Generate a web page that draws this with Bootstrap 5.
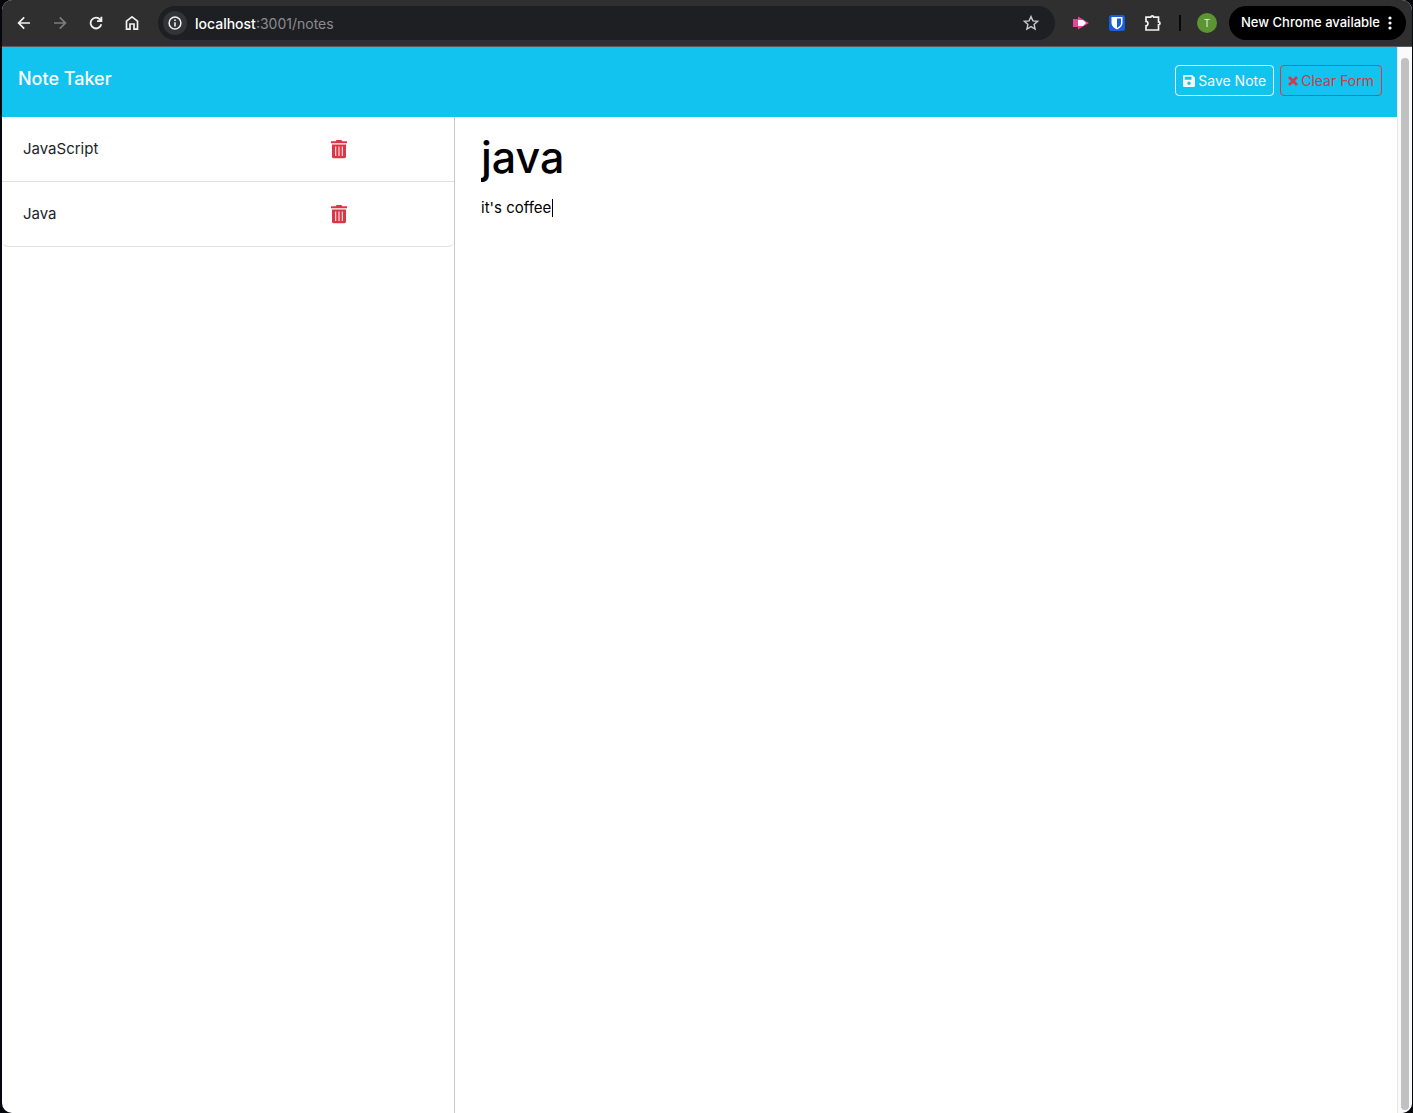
<!DOCTYPE html>
<html lang="en">
<head>
<meta charset="utf-8">
<meta name="viewport" content="width=device-width, initial-scale=1">
<title>Note Taker</title>
<link href="https://cdn.jsdelivr.net/npm/bootstrap@5.3.0/dist/css/bootstrap.min.css" rel="stylesheet">
<style>
  body { font-family: Inter, "Liberation Sans", sans-serif; background: #05070d; padding: 0 1px 0 2px; }
  svg { display: block; flex: none; }
  .browser { border-radius: 10px; background: #fff; }
  .toolbar { height: 47px; background: #2f2f2f; border-bottom: 1px solid #5a5a5a; padding: 0 6px 0 12px; }
  .tool-btn { width: 20px; height: 20px; margin-right: 16px; padding: 0; border: 0; background: none; color: #f1f1f1; display: flex; align-items: center; justify-content: center; }
  .tool-btn.off { color: #7d7d7d; }
  .omnibox { height: 34px; background: #1e1f23; color: #8b8c8f; font-size: 14px; padding: 0 14px 0 5px; margin-right: 16px; }
  .omnibox b { color: #fff; font-weight: 500; }
  .site-info { width: 24px; height: 24px; background: #333437; margin-right: 8px; color: #f1f1f1; }
  .avatar { width: 20px; height: 20px; background: #5b9632; color: #e4efdc; font-size: 10px; }
  .bar-line { width: 2px; height: 16px; background: #080808; margin-right: 16px; }
  .update { height: 34px; background: #000; color: #fff; border: 0; font-size: 13px; font-weight: 500; padding: 0 14px 0 12px; gap: 8px; margin-left: 12px; }
  .page-head { height: 70px; background: #12c3f0; padding: 0 15px 0 16px; }
  .brand { color: #fff; font-size: 18px; font-weight: 500; line-height: 30px; margin-top: 17px; }
  .head-actions { gap: 6px; padding-bottom: 3px; }
  .head-btn { height: 31px; font-size: 14px; line-height: 20px; padding: 0 7px; gap: 3px; border-radius: 4px; }
  .notes-wrap { padding-right: 12px; }
  .notes-pane { border-right: 1px solid #c9c9c9; }
  .note-row { height: 65px; padding: 1px 21px 0; font-size: 15px; --bs-list-group-border-color: #dfdfdf; --bs-list-group-color: #212529; }
  .note-row:first-child { border-top: 0; border-radius: 0; }
  .note-row + .note-row { border-radius: 0 0 6px 6px; }
  .editor { padding: 0 12px; }
  .field { display: block; width: 100%; border: 0; outline: 0; padding: 0 2px; color: #000; resize: none; background: none; }
  .title-field { font-size: 43px; font-weight: 500; line-height: 56px; height: 56px; margin: 12px 0 8px; }
  .text-field { font-size: 15px; line-height: 30px; }
  .caret { position: absolute; left: 73px; top: 6px; width: 1px; height: 18px; background: #000; }
  .scroll-track { width: 15px; background: #fafafa; border-left: 1px solid #e8e8e8; padding: 11px 3px 3px; border-radius: 0 0 10px 0; }
  .scroll-thumb { width: 8px; border-radius: 4px; background: #c1c1c1; }
</style>
<script src="https://cdn.jsdelivr.net/npm/bootstrap@5.3.0/dist/js/bootstrap.bundle.min.js"></script>
</head>
<body>
<div class="browser d-flex flex-column vh-100 overflow-hidden">
  <div class="toolbar d-flex align-items-center flex-shrink-0">
    <button class="tool-btn" aria-label="Back"><svg width="14" height="14" viewBox="0 0 14 14" fill="none" stroke="currentColor" stroke-width="1.7"><path d="M13 7H2M7.2 1.3 1.6 7l5.6 5.7"/></svg></button>
    <button class="tool-btn off" aria-label="Forward"><svg width="14" height="14" viewBox="0 0 14 14" fill="none" stroke="currentColor" stroke-width="1.7"><path d="M1 7h11M6.8 1.3 12.4 7l-5.6 5.7"/></svg></button>
    <button class="tool-btn" aria-label="Reload"><svg width="14" height="14" viewBox="0 0 14 14" fill="none" stroke="currentColor" stroke-width="1.8"><path d="M12.3 8.3A5.4 5.4 0 1 1 11.2 3.6l1 1.2M12.4.8v4.3H8"/></svg></button>
    <button class="tool-btn" aria-label="Home"><svg width="14" height="14" viewBox="0 0 14 14" fill="none" stroke="currentColor" stroke-width="1.7"><path d="M1.5 13.2V5.2L7 .9l5.5 4.3v8H9V8H5v5.2z"/></svg></button>
    <div class="omnibox d-flex align-items-center flex-grow-1 rounded-pill">
      <span class="site-info rounded-circle d-flex align-items-center justify-content-center"><svg width="14" height="14" viewBox="0 0 14 14"><circle cx="7" cy="7" r="5.9" fill="none" stroke="currentColor" stroke-width="1.5"/><path d="M6.2 6.2h1.6v4.2H6.2zM6.2 3.5h1.6v1.6H6.2z" fill="currentColor"/></svg></span>
      <span class="flex-grow-1"><b>localhost</b>:3001/notes</span>
      <svg width="20" height="20" viewBox="0 0 20 20" fill="none" stroke="#c9c9c9" stroke-width="1.4"><path d="m10 3.6 1.900 4.300 4.700.4-3.500 3.100 1 4.600-4.100-2.400L5.900 16l1-4.600-3.500-3.100 4.700-.4z"/></svg>
    </div>
    <button class="tool-btn" aria-label="Recorder"><svg width="18" height="16" viewBox="0 0 18 16"><path d="M1 4h5V1.500L17 8 6 14.500V12H1z" fill="#e9429f"/><path d="M6 5h5l3 3-3 3H6z" fill="#fff"/></svg></button>
    <button class="tool-btn" aria-label="Password manager"><svg width="16" height="16" viewBox="0 0 16 16"><rect width="16" height="16" rx="2.500" fill="#175ddc"/><path d="M2.500 2h11v6c0 3-2.300 5-5.500 6.500C4.800 13 2.500 11 2.500 8z" fill="#fff"/><path d="M8 3.600h4V8c0 2-1.500 3.500-4 4.900z" fill="#175ddc"/></svg></button>
    <button class="tool-btn" aria-label="Extensions"><svg width="18" height="18" viewBox="0 0 18 18" fill="none" stroke="currentColor" stroke-width="1.700"><path d="M2 3.200h4.700a1.500 1.300 0 0 1 3 0h4.800v4.600a1.500 1.500 0 0 1 0 3v5.200H2v-4.200c2.600 0 2.600-4.400 0-4.400z"/></svg></button>
    <span class="bar-line"></span>
    <span class="avatar rounded-circle d-flex align-items-center justify-content-center">T</span>
    <button class="update rounded-pill d-flex align-items-center">New Chrome available <svg width="4" height="16" viewBox="0 0 4 16" fill="#fff"><circle cx="2" cy="3" r="1.600"/><circle cx="2" cy="8" r="1.600"/><circle cx="2" cy="13" r="1.600"/></svg></button>
  </div>
  <div class="d-flex flex-grow-1">
    <div class="flex-grow-1 d-flex flex-column">
      <nav class="page-head d-flex justify-content-between">
        <a class="brand text-decoration-none" href="#">Note Taker</a>
        <div class="head-actions d-flex align-items-center">
          <button class="btn btn-outline-light head-btn d-flex align-items-center"><svg width="12" height="12" viewBox="0 0 12 12"><path fill="currentColor" fill-rule="evenodd" d="M1.300 0h7.900L12 2.800v7.900c0 .7-.6 1.300-1.300 1.300H1.300C.6 12 0 11.400 0 10.700V1.300C0 .6.6 0 1.300 0zM1.700 1.700v3h6.800v-3zM6 6.600a1.700 1.700 0 1 0 0 3.400 1.700 1.700 0 0 0 0-3.400z"/></svg>Save Note</button>
          <button class="btn btn-outline-danger head-btn d-flex align-items-center"><svg width="10" height="10" viewBox="0 0 10 10" stroke="currentColor" stroke-width="2.700"><path d="m1 1 8 8M9 1 1 9"/></svg>Clear Form</button>
        </div>
      </nav>
      <main class="row g-0 flex-grow-1">
        <div class="notes-wrap col-4 d-flex">
          <div class="notes-pane flex-grow-1">
            <ul class="list-group">
              <li class="list-group-item note-row border-start-0 border-end-0 d-flex align-items-center"><span class="col-9">JavaScript</span><button class="btn p-0 border-0 text-danger" aria-label="Delete JavaScript"><svg width="16" height="19" viewBox="0 0 16 19"><path fill="currentColor" fill-rule="evenodd" d="M5.500 0h5l.7 1.200H16v2H0v-2h4.800zM1 4.500h14v12c0 1-.7 1.700-1.700 1.700H2.700C1.700 18.200 1 17.500 1 16.500zM4.200 6.500v9.500h1V6.500zM7.500 6.500v9.500h1V6.500zM10.800 6.500v9.500h1V6.500z"/></svg></button></li>
              <li class="list-group-item note-row border-start-0 border-end-0 d-flex align-items-center"><span class="col-9">Java</span><button class="btn p-0 border-0 text-danger" aria-label="Delete Java"><svg width="16" height="19" viewBox="0 0 16 19"><path fill="currentColor" fill-rule="evenodd" d="M5.500 0h5l.7 1.200H16v2H0v-2h4.800zM1 4.500h14v12c0 1-.7 1.700-1.700 1.700H2.700C1.700 18.200 1 17.500 1 16.500zM4.200 6.500v9.500h1V6.500zM7.500 6.500v9.500h1V6.500zM10.800 6.500v9.500h1V6.500z"/></svg></button></li>
            </ul>
          </div>
        </div>
        <div class="editor col-8">
          <input class="field title-field" aria-label="Note title" value="java">
          <div class="position-relative"><textarea class="field text-field" rows="20" aria-label="Note text">it's coffee</textarea><span class="caret"></span></div>
        </div>
      </main>
    </div>
    <div class="scroll-track d-flex"><span class="scroll-thumb"></span></div>
  </div>
</div>
</body>
</html>
